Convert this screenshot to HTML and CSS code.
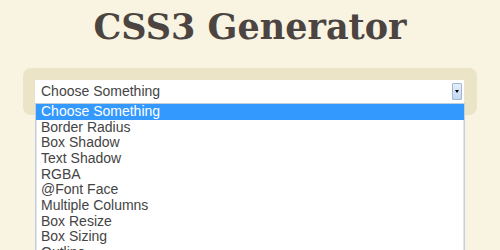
FILE: index.html
```html
<!DOCTYPE html>
<html>
<head>
<meta charset="utf-8">
<link rel="stylesheet" href="styles.css">
</head>
<body>
<h1 class="title">CSS3 Generator</h1>
<div class="panel">
  <div class="select">
    <span class="select-value">Choose Something</span>
    <span class="select-btn"><svg width="4" height="3" viewBox="0 0 4 3"><path d="M0 0H4L2 3Z" fill="#000"/></svg></span>
  </div>
</div>
<ul class="options">
  <li class="option selected">Choose Something</li>
  <li class="option">Border Radius</li>
  <li class="option">Box Shadow</li>
  <li class="option">Text Shadow</li>
  <li class="option">RGBA</li>
  <li class="option">@Font Face</li>
  <li class="option">Multiple Columns</li>
  <li class="option">Box Resize</li>
  <li class="option">Box Sizing</li>
  <li class="option">Outline</li>
</ul>
</body>
</html>
```
FILE: styles.css
```css
html, body {
  margin: 0;
  padding: 0;
  height: 250px;
  overflow: hidden;
}
body {
  background: #f8f4e1;
  font-family: "Liberation Sans", Arial, sans-serif;
  position: relative;
}
.title {
  margin: 0;
  padding: 5px 0 19px;
  height: 44px;
  line-height: 44px;
  text-align: center;
  font-family: "DejaVu Serif", serif;
  font-weight: bold;
  font-size: 35px;
  color: #4c4441;
}
.panel {
  margin: 0 23px;
  padding: 12px 13px 12px 12px;
  background: #ebe4c7;
  border-radius: 8px;
}
.select {
  height: 23px;
  background: #fff;
  display: flex;
  align-items: center;
  justify-content: space-between;
  padding-left: 6px;
}
.select-value {
  font-size: 14px;
  color: #444;
  line-height: 23px;
}
.select-btn {
  width: 8px;
  height: 15px;
  margin-right: 2px;
  border: 1px solid #9fb6cf;
  border-radius: 1px;
  background: linear-gradient(#e4effb, #c3d8f0);
  display: flex;
  align-items: center;
  justify-content: center;
}
.select-btn svg { display: block; }
.options {
  position: absolute;
  top: 103px;
  left: 35px;
  width: 428px;
  margin: 0;
  padding: 0;
  list-style: none;
  background: #fff;
  border: 1px solid #c3cfda;
  border-bottom: none;
  box-shadow: inset 1px 0 0 #dfe6ec, inset -1px 0 0 #dfe6ec;
}
.option {
  font-size: 14px;
  line-height: 15.67px;
  height: 15.67px;
  padding-left: 5px;
  color: #444;
  white-space: nowrap;
}
.option.selected {
  background: #3399ff;
  color: #fff;
}
```
